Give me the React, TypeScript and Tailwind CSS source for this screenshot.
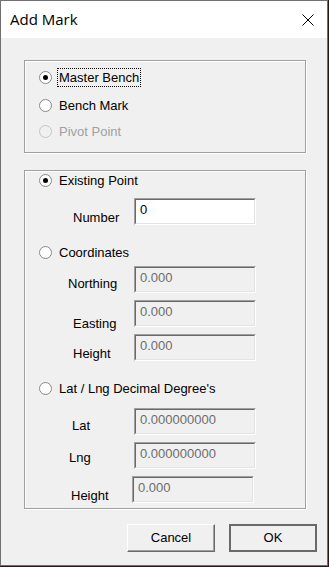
import React from 'react';

const ui = { fontFamily: '"Liberation Sans", Arial, sans-serif' };

/* classic win32 radio */
const Radio: React.FC<{ checked?: boolean; disabled?: boolean }> = ({ checked, disabled }) => (
    <span
        className={`relative shrink-0 w-[13px] h-[13px] rounded-full border ${disabled ? 'border-[#c4c4c4] bg-[#f0f0f0]' : 'border-[#8a8a8a] bg-white'} flex items-center justify-center`}
    >
        {checked && <span className="w-[5px] h-[5px] rounded-full bg-black" />}
    </span>
);

const RadioRow: React.FC<{ label: string; checked?: boolean; disabled?: boolean; focus?: boolean; className?: string }> = ({
    label,
    checked,
    disabled,
    focus,
    className = '',
}) => (
    <div className={`flex items-center h-[18px] pl-[14px] ${className}`}>
        <Radio checked={checked} disabled={disabled} />
        <span
            className={`ml-[6px] px-[1px] leading-[17px] text-[13px] ${disabled ? 'text-[#a0a0a0]' : 'text-black'} ${focus ? 'outline outline-1 outline-dotted outline-black' : ''}`}
        >
            {label}
        </span>
    </div>
);

/* sunken text box with label on the left */
const Field: React.FC<{
    label: string;
    value: string;
    labelX: number;
    labelTop: number;
    enabled?: boolean;
    inputW?: string;
    className?: string;
}> = ({ label, value, labelX, labelTop, enabled, inputW = 'w-[109px]', className = '' }) => (
    <div className={`flex h-[27px] ${className}`}>
        <div className={`${inputW} shrink-0 text-[13px] leading-[15px] text-black`} style={{ paddingLeft: labelX, paddingTop: labelTop }}>
            {label}
        </div>
        <div className="w-[122px] h-[27px] border border-t-[#a0a0a0] border-l-[#a0a0a0] border-b-white border-r-white">
            <div
                className={`w-full h-full border border-t-[#696969] border-l-[#696969] border-b-[#e3e3e3] border-r-[#e3e3e3] pl-[4px] pt-[2px] text-[13px] leading-[15px] ${enabled ? 'bg-white text-black' : 'bg-[#f0f0f0] text-[#6d6d6d]'}`}
            >
                {value}
            </div>
        </div>
    </div>
);

const Button: React.FC<{ label: string; primary?: boolean }> = ({ label, primary }) => (
    <button
        className={`w-[88px] h-[28px] text-[13px] text-black bg-[#f0f0f0] ${primary ? 'border-2 border-[#6a6a6a]' : 'border border-t-white border-l-white border-b-[#696969] border-r-[#696969] shadow-[inset_-1px_-1px_0_#a0a0a0]'}`}
        style={ui}
    >
        {label}
    </button>
);

export default function App() {
    return (
        <div className="w-[329px] h-[567px] bg-[#2b1616]">
            <div className="w-[328px] h-[566px] border border-[#707070] bg-[#f0f0f0] flex flex-col" style={ui}>
                {/* Title bar */}
                <div className="h-[37px] bg-white flex items-center justify-between pl-[9px] pr-[13px] shrink-0">
                    <span className="text-[15px] text-black" style={{ fontFamily: '"Open Sans", "Noto Sans", sans-serif' }}>
                        Add Mark
                    </span>
                    <svg width="12" height="12" viewBox="0 0 12 12" className="mt-[1px]">
                        <path d="M0.5 0.5 L11.5 11.5 M11.5 0.5 L0.5 11.5" stroke="#000" strokeWidth="1" />
                    </svg>
                </div>

                {/* Mark type */}
                <div className="ml-[23px] mt-[22px] w-[282px] h-[93px] border border-[#a0a0a0] shadow-[1px_1px_0_#ffffff,inset_1px_1px_0_#ffffff] shrink-0">
                    <RadioRow label="Master Bench" checked focus className="mt-[7px]" />
                    <RadioRow label="Bench Mark" className="mt-[10px]" />
                    <RadioRow label="Pivot Point" disabled className="mt-[8px]" />
                </div>

                {/* Location */}
                <div className="ml-[23px] mt-[17px] w-[282px] h-[339px] border border-[#a0a0a0] shadow-[1px_1px_0_#ffffff,inset_1px_1px_0_#ffffff] shrink-0">
                    <RadioRow label="Existing Point" checked />
                    <Field label="Number" value="0" labelX={48} labelTop={12} enabled className="mt-[9px]" />

                    <RadioRow label="Coordinates" className="mt-[18px]" />
                    <Field label="Northing" value="0.000" labelX={43} labelTop={10} className="mt-[5px]" />
                    <Field label="Easting" value="0.000" labelX={48} labelTop={16} className="mt-[7px]" />
                    <Field label="Height" value="0.000" labelX={48} labelTop={12} className="mt-[7px]" />

                    <RadioRow label="Lat / Lng Decimal Degree's" className="mt-[18px]" />
                    <Field label="Lat" value="0.000000000" labelX={47} labelTop={10} className="mt-[11px]" />
                    <Field label="Lng" value="0.000000000" labelX={44} labelTop={8} className="mt-[7px]" />
                    <Field label="Height" value="0.000" labelX={46} labelTop={12} inputW="w-[107px]" className="mt-[7px]" />
                </div>

                {/* Buttons */}
                <div className="flex justify-end gap-[14px] mt-[15px] mr-[10px]">
                    <Button label="Cancel" />
                    <Button label="OK" primary />
                </div>
            </div>
        </div>
    );
}
